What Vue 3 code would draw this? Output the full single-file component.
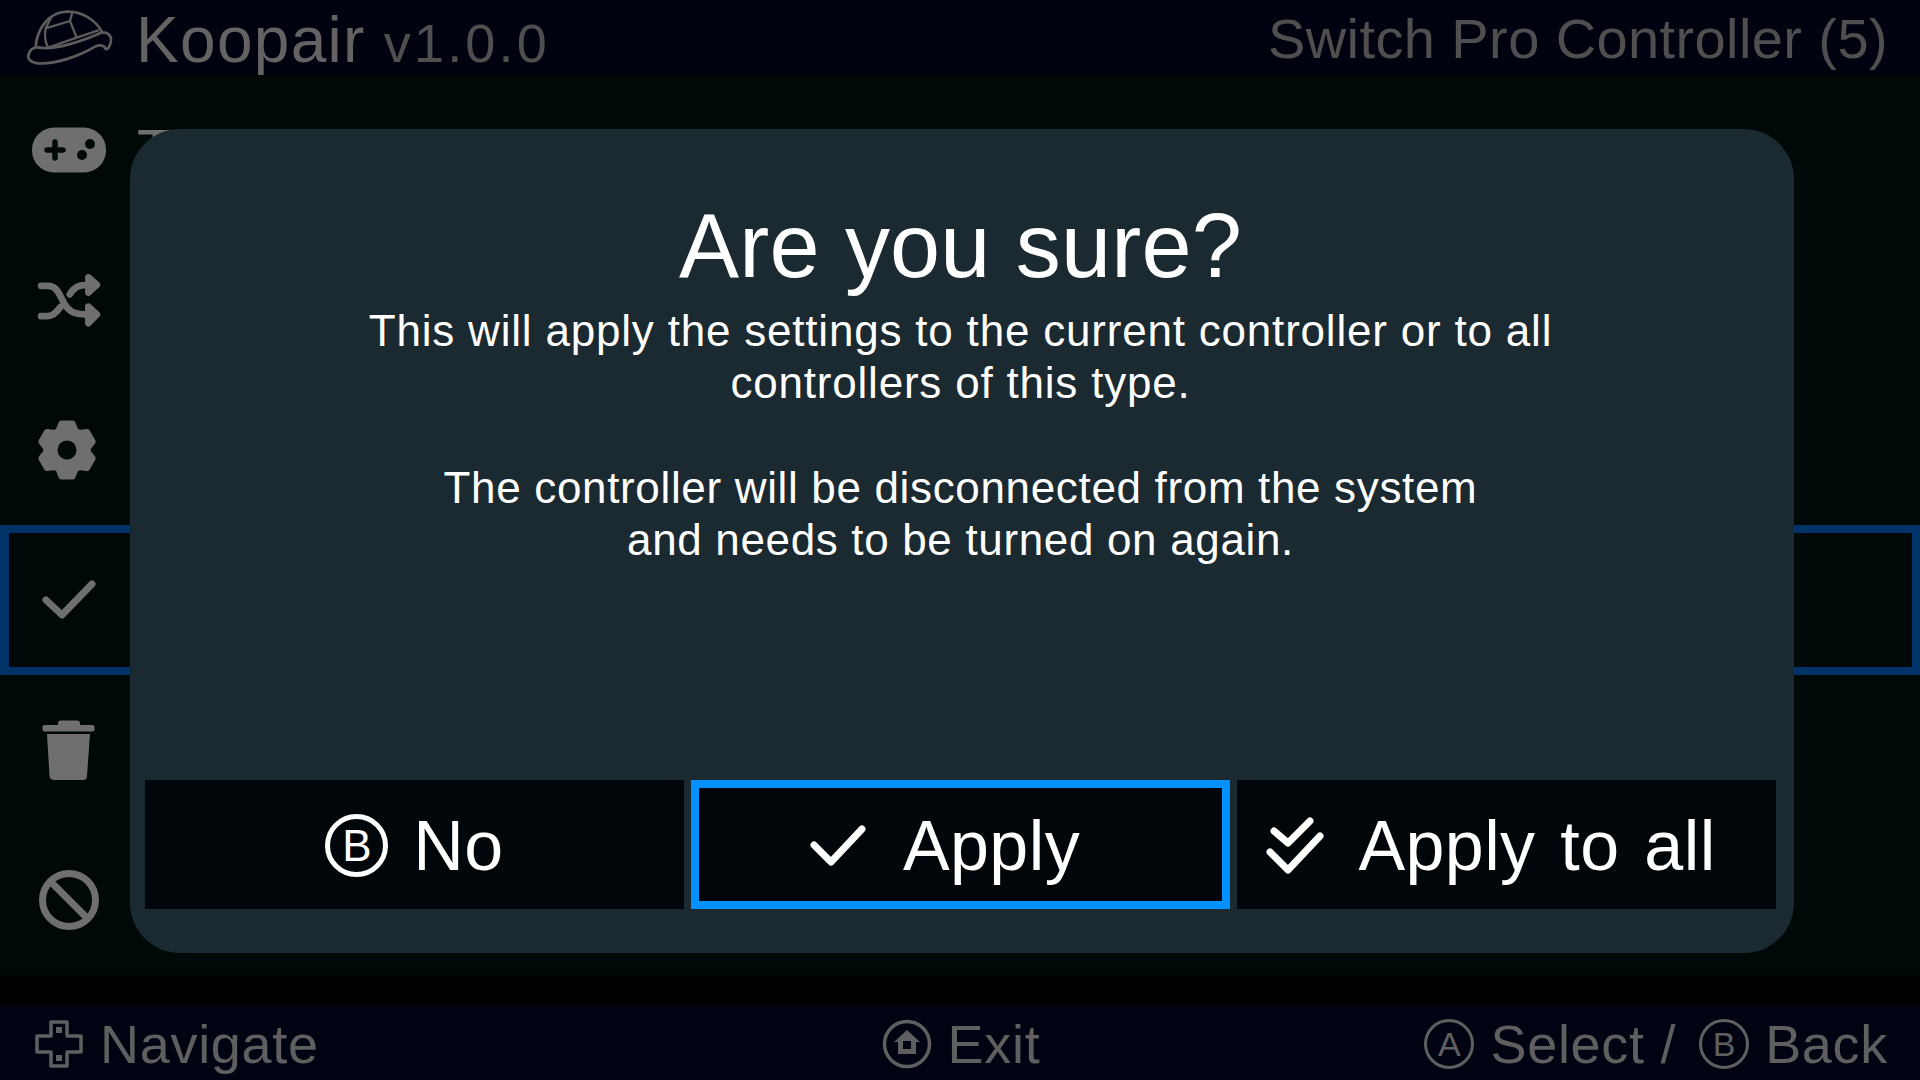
<script setup>
const gearPoints = (() => {
  const pts = []
  for (let i = 0; i < 6; i++) {
    const a = -90 + i * 60
    for (const [d, r] of [[-24, 21], [-12, 27], [12, 27], [24, 21]]) {
      const t = ((a + d) * Math.PI) / 180
      pts.push(`${(30 + r * Math.cos(t)).toFixed(1)},${(30 + r * Math.sin(t)).toFixed(1)}`)
    }
  }
  return pts.join(' ')
})()
</script>

<template>
  <div class="screen">
    <header class="top">
      <div class="brand">
        <svg class="turtle" viewBox="0 0 330 195" fill="none" stroke="currentColor" stroke-width="8" stroke-linejoin="round" stroke-linecap="round">
          <path d="M62 125C66 72 100 22 155 20C205 18 245 50 262 82C280 82 292 94 287 112C284 124 279 134 272 132C268 120 255 118 240 125C190 155 120 178 70 175C45 173 35 160 42 145C47 132 58 125 75 128C120 135 200 110 262 82" />
          <path d="M92 70L165 48L185 98L100 128C90 115 88 90 92 70M92 70L108 38M165 48L172 22M185 98L250 76" stroke-width="7" />
        </svg>
        <span class="name">Koopair</span>
        <span class="ver">v1.0.0</span>
      </div>
      <span class="device">Switch Pro Controller (5)</span>
    </header>

    <main class="menu">
      <div class="row">
        <span class="cell">
          <svg width="76" height="46" viewBox="0 0 76 46">
            <rect x="1" y="0.5" width="74" height="45" rx="22" fill="#6f6f6f" />
            <path d="M24 15v16M16 23h16" stroke="#000808" stroke-width="5.5" stroke-linecap="round" />
            <circle cx="59" cy="17" r="5" fill="#000808" />
            <circle cx="51" cy="28" r="5" fill="#000808" />
          </svg>
        </span>
        <span class="label">T</span>
      </div>
      <div class="row">
        <span class="cell nudge">
          <svg width="64" height="54" viewBox="55 40 185 160" fill="none" stroke="#6f6f6f" stroke-width="20" stroke-linecap="round" stroke-linejoin="round">
            <path d="M65 75H85C112 75 118 100 132 125C148 155 165 160 210 160" />
            <path d="M65 165H85C100 165 112 152 122 138M150 100C165 75 180 72 210 72" />
            <path d="M205 50L230 72L205 95ZM205 137L230 160L205 186Z" fill="#6f6f6f" />
          </svg>
        </span>
      </div>
      <div class="row">
        <span class="cell gear">
          <svg width="60" height="60" viewBox="0 0 60 60">
            <polygon :points="gearPoints" fill="#6f6f6f" stroke="#6f6f6f" stroke-width="6" stroke-linejoin="round" />
            <circle cx="30" cy="30" r="9.5" fill="#000808" />
          </svg>
        </span>
      </div>
      <div class="row on">
        <span class="cell">
          <svg width="54" height="40" viewBox="0 0 54 40" fill="none" stroke="#6f6f6f" stroke-width="7" stroke-linecap="round" stroke-linejoin="round">
            <path d="M4 20L20 35L50 4" />
          </svg>
        </span>
      </div>
      <div class="row">
        <span class="cell">
          <svg width="54" height="60" viewBox="0 0 54 60" fill="#6f6f6f">
            <rect x="0.5" y="5" width="52" height="6.5" rx="2" />
            <rect x="16" y="0.5" width="22" height="8" rx="3" />
            <path d="M5 14H48L45 56Q45 60 41 60H12Q8 60 7.5 56Z" />
          </svg>
        </span>
      </div>
      <div class="row">
        <span class="cell">
          <svg width="62" height="60" viewBox="0 0 62 60" fill="none" stroke="#6f6f6f" stroke-width="7">
            <circle cx="31" cy="30" r="26.5" />
            <path d="M12 11L50 49" />
          </svg>
        </span>
      </div>
    </main>

    <footer class="bottom">
      <div class="hint">
        <svg width="50" height="50" viewBox="0 0 50 50" fill="none" stroke="currentColor" stroke-width="3.5" stroke-linejoin="round">
          <path d="M17 3H33V17H47V33H33V47H17V33H3V17H17Z" />
          <rect x="22" y="8" width="6" height="6" fill="currentColor" stroke="none" />
          <rect x="22" y="36" width="6" height="6" fill="currentColor" stroke="none" />
        </svg>
        <span>Navigate</span>
      </div>
      <div class="hint exit">
        <svg width="50" height="50" viewBox="0 0 50 50">
          <circle cx="25" cy="25" r="22.5" fill="none" stroke="currentColor" stroke-width="3.5" />
          <path d="M25 11L38 23H34V35H16V23H12Z" fill="currentColor" />
          <rect x="21" y="22" width="8" height="8" fill="#000412" />
        </svg>
        <span>Exit</span>
      </div>
      <div class="hint end">
        <span class="pad small">A</span>
        <span class="wide">Select /</span>
        <span class="pad small">B</span>
        <span>Back</span>
      </div>
    </footer>

    <section class="modal">
      <h1>Are you sure?</h1>
      <div class="copy">
        <p>This will apply the settings to the current controller or to all<br />controllers of this type.</p>
        <p class="tight">The controller will be disconnected from the system<br />and needs to be turned on again.</p>
      </div>
      <div class="actions">
        <button class="btn">
          <span class="pad">B</span>
          <span>No</span>
        </button>
        <button class="btn sel">
          <svg width="56" height="42" viewBox="0 0 56 42" fill="none" stroke="#fff" stroke-width="7" stroke-linecap="round" stroke-linejoin="round">
            <path d="M4 20L21 37L52 4" />
          </svg>
          <span class="shift">Apply</span>
        </button>
        <button class="btn">
          <svg width="58" height="57" viewBox="0 0 58 57" fill="none" stroke="#fff" stroke-width="7" stroke-linecap="round" stroke-linejoin="round">
            <path d="M8 14L22 26L44 4M4 35L22 53L54 19" />
          </svg>
          <span class="shift">Apply to all</span>
        </button>
      </div>
    </section>
  </div>
</template>

<style scoped>
.screen {
  position: relative;
  width: 1920px;
  height: 1080px;
  overflow: hidden;
  display: flex;
  flex-direction: column;
  background: #000;
  font-family: "Liberation Sans", Arial, sans-serif;
}
.top {
  height: 75px;
  flex: none;
  display: flex;
  align-items: center;
  justify-content: space-between;
  padding: 0 32px 0 15px;
  background: #00030f;
  color: #4f4f4f;
}
.brand {
  display: flex;
  align-items: center;
}
.turtle {
  width: 110px;
  height: 65px;
  margin-right: 11px;
  color: #5c5c5c;
}
.name {
  font-size: 64px;
  letter-spacing: 1.3px;
  margin-top: 4px;
  color: #636363;
}
.ver {
  font-size: 54px;
  letter-spacing: 3.2px;
  margin-left: 18px;
  margin-top: 10px;
}
.device {
  font-size: 56px;
  letter-spacing: 0.4px;
  margin-top: 1px;
}
.menu {
  height: 900px;
  flex: none;
  background: #000808;
}
.row {
  height: 150px;
  box-sizing: border-box;
  display: flex;
  align-items: center;
  padding-left: 31px;
}
.row.on {
  border: 8px solid #003468;
  border-left-width: 9px;
  padding-left: 22px;
}
.cell {
  width: 76px;
  display: flex;
  justify-content: center;
}
.nudge {
  padding-top: 2px;
}
.gear {
  padding-right: 4px;
  box-sizing: border-box;
}
.label {
  position: absolute;
  left: 137px;
  font-size: 60px;
  color: #6f6f6f;
}
.bottom {
  flex: 1;
  margin-top: 30px;
  display: grid;
  grid-template-columns: 1fr auto 1fr;
  align-items: center;
  padding: 2px 32px 0 34px;
  background: #000412;
  color: #5f5f5f;
  font-size: 54px;
}
.hint {
  display: flex;
  align-items: center;
  gap: 16px;
  letter-spacing: 0.7px;
}
.wide {
  margin-right: 7px;
}
.exit {
  justify-content: center;
}
.end {
  justify-content: flex-end;
}
.modal {
  position: absolute;
  left: 130px;
  top: 129px;
  width: 1664px;
  height: 824px;
  box-sizing: border-box;
  padding: 0 18px 44px 15px;
  border-radius: 50px;
  background: #1b2a31;
  color: #fff;
  display: flex;
  flex-direction: column;
  text-align: center;
}
h1 {
  margin: 67px 0 0;
  font-size: 90px;
  font-weight: 400;
  letter-spacing: 0.2px;
  line-height: 100px;
}
.copy {
  font-size: 44px;
  letter-spacing: 0.8px;
  line-height: 52.3px;
  margin-top: 9px;
}
.copy p {
  margin: 0 0 52px;
}
.copy .tight {
  letter-spacing: 0.66px;
}
.actions {
  margin-top: auto;
  display: grid;
  grid-template-columns: repeat(3, 1fr);
  gap: 7px;
  height: 129px;
}
.btn {
  box-sizing: border-box;
  display: flex;
  align-items: center;
  justify-content: center;
  gap: 25px;
  padding: 2px 0 0;
  border: 0;
  background: #000609;
  color: #fff;
  font: inherit;
  font-size: 70px;
  letter-spacing: 0.4px;
  word-spacing: 5px;
}
.btn.sel {
  border: 8px solid #0090ff;
  gap: 37px;
}
.btn:last-child {
  gap: 34px;
}
.shift {
  margin-right: 31px;
}
.pad {
  width: 63px;
  height: 63px;
  box-sizing: border-box;
  display: inline-flex;
  align-items: center;
  justify-content: center;
  border: 5px solid #fff;
  border-radius: 50%;
  font-size: 44px;
  line-height: 1;
  letter-spacing: 0;
}
.pad.small {
  width: 50px;
  height: 50px;
  border: 3.5px solid currentColor;
  font-size: 34px;
}
</style>
